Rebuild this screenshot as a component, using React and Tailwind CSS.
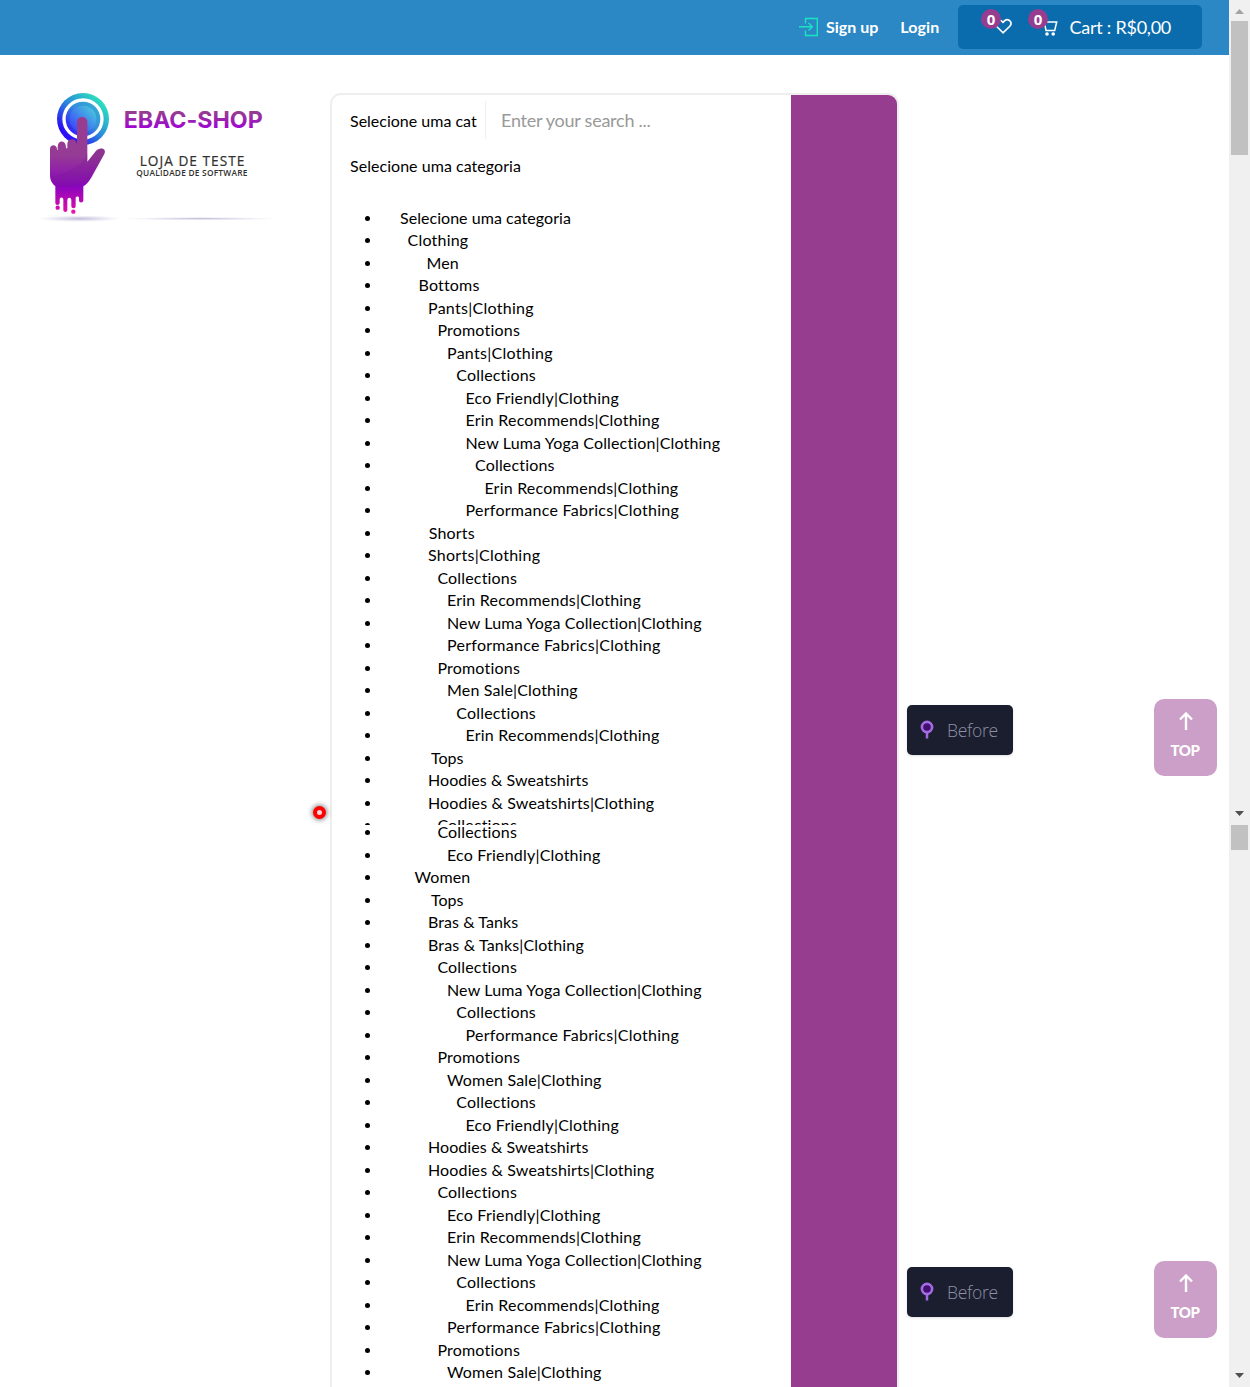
import React from "react";

const upper = [
  [400, "Selecione uma categoria"],
  [407.5, "Clothing"],
  [426.5, "Men"],
  [418.5, "Bottoms"],
  [428, "Pants|Clothing"],
  [437.4, "Promotions"],
  [447, "Pants|Clothing"],
  [456.3, "Collections"],
  [465.5, "Eco Friendly|Clothing"],
  [465.5, "Erin Recommends|Clothing"],
  [465.5, "New Luma Yoga Collection|Clothing"],
  [475, "Collections"],
  [484.4, "Erin Recommends|Clothing"],
  [465.5, "Performance Fabrics|Clothing"],
  [428.7, "Shorts"],
  [428, "Shorts|Clothing"],
  [437.4, "Collections"],
  [447, "Erin Recommends|Clothing"],
  [447, "New Luma Yoga Collection|Clothing"],
  [447, "Performance Fabrics|Clothing"],
  [437.4, "Promotions"],
  [447, "Men Sale|Clothing"],
  [456.3, "Collections"],
  [465.5, "Erin Recommends|Clothing"],
  [431, "Tops"],
  [428, "Hoodies & Sweatshirts"],
  [428, "Hoodies & Sweatshirts|Clothing"],
  [437.4, "Collections"],
];

const lower = [
  [437.4, "Collections"],
  [447, "Eco Friendly|Clothing"],
  [414.5, "Women"],
  [431, "Tops"],
  [428, "Bras & Tanks"],
  [428, "Bras & Tanks|Clothing"],
  [437.4, "Collections"],
  [447, "New Luma Yoga Collection|Clothing"],
  [456.3, "Collections"],
  [465.5, "Performance Fabrics|Clothing"],
  [437.4, "Promotions"],
  [447, "Women Sale|Clothing"],
  [456.3, "Collections"],
  [465.5, "Eco Friendly|Clothing"],
  [428, "Hoodies & Sweatshirts"],
  [428, "Hoodies & Sweatshirts|Clothing"],
  [437.4, "Collections"],
  [447, "Eco Friendly|Clothing"],
  [447, "Erin Recommends|Clothing"],
  [447, "New Luma Yoga Collection|Clothing"],
  [456.3, "Collections"],
  [465.5, "Erin Recommends|Clothing"],
  [447, "Performance Fabrics|Clothing"],
  [437.4, "Promotions"],
  [447, "Women Sale|Clothing"],
];

const tracking = {
  "Selecione uma categoria": 0.04,
  Clothing: 0.22,
  Men: 0.1,
  Bottoms: 0.18,
  "Pants|Clothing": 0.28,
  Promotions: 0.2,
  Collections: 0.17,
  "Eco Friendly|Clothing": 0.21,
  "Erin Recommends|Clothing": 0.21,
  "New Luma Yoga Collection|Clothing": 0.155,
  "Performance Fabrics|Clothing": 0.27,
  Shorts: 0.2,
  "Shorts|Clothing": 0.27,
  "Men Sale|Clothing": 0.16,
  Tops: 0,
  "Hoodies & Sweatshirts": 0.07,
  "Hoodies & Sweatshirts|Clothing": 0.14,
  "Bras & Tanks": 0.07,
  "Bras & Tanks|Clothing": 0.16,
  Women: 0.1,
  "Women Sale|Clothing": 0.17,
};

function CategoryList({ items }) {
  return (
    <ul>
      {items.map(([x, label], i) => (
        <li key={i} className="flex h-[22.5px] items-center whitespace-nowrap pl-[33px] leading-[22.5px]">
          <span className="mt-px size-[5px] shrink-0 rounded-full bg-black" />
          <span style={{ marginLeft: x - 370, letterSpacing: tracking[label] }}>{label}</span>
        </li>
      ))}
    </ul>
  );
}

function Logo() {
  return (
    <svg className="ml-[30px] mt-[25px] block" width="250" height="150" viewBox="0 0 750 450">
      <defs>
        <linearGradient id="ring" x1="0" y1="1" x2="1" y2="0">
          <stop offset="0.2" stopColor="#2b10f5" />
          <stop offset="0.5" stopColor="#2a86dd" />
          <stop offset="0.85" stopColor="#2be0bd" />
        </linearGradient>
        <linearGradient id="disc" x1="0" y1="1" x2="1" y2="0">
          <stop offset="0.15" stopColor="#2f1bfa" />
          <stop offset="0.55" stopColor="#348fdd" />
          <stop offset="0.9" stopColor="#35aed2" />
        </linearGradient>
        <linearGradient id="core" x1="0" y1="1" x2="1" y2="0">
          <stop offset="0.1" stopColor="#3a45fa" />
          <stop offset="0.9" stopColor="#48c8dc" />
        </linearGradient>
        <linearGradient id="hand" gradientUnits="userSpaceOnUse" x1="0" y1="110" x2="0" y2="400">
          <stop offset="0" stopColor="#983c8f" />
          <stop offset="0.4" stopColor="#963b95" />
          <stop offset="0.72" stopColor="#8a05be" />
          <stop offset="1" stopColor="#e010a8" />
        </linearGradient>
        <linearGradient id="word" x1="0" y1="0" x2="0" y2="1">
          <stop offset="0.25" stopColor="#963d90" />
          <stop offset="0.8" stopColor="#a004d4" />
        </linearGradient>
        <radialGradient id="shade">
          <stop offset="0" stopColor="#a7a3c9" stopOpacity="0.75" />
          <stop offset="1" stopColor="#c5c2dd" stopOpacity="0" />
        </radialGradient>
      </defs>
      <ellipse cx="148" cy="416" rx="125" ry="10" fill="url(#shade)" />
      <ellipse cx="512" cy="416" rx="235" ry="5" fill="url(#shade)" />
      <circle cx="159" cy="117" r="78" fill="url(#ring)" />
      <circle cx="159" cy="117" r="57" fill="url(#disc)" stroke="#fff" strokeWidth="10" />
      <circle cx="159" cy="117" r="40" fill="url(#core)" />
      <path
        fill="url(#hand)"
        d="M60 207c0-15 20-15 21 0v3h2v-9c0-22 24-22 25 0v4h4v-13c0-19 27-19 29 0v5V126c0-20 31-20 31 0v119l25-31c11-14 34-10 26 8l-42 75c-5 9-13 17-21 22v42c0 9-13 9-13 0v-7c0-6-10-6-10 0v24c0 9-13 9-13 0v-17c0-10-12-10-12 0v29c0 8-12 8-12 0v-31c0-9-11-9-11 0v10c0 8-13 8-13 0v-50c-9-8-16-17-16-33z"
      />
      <path fill="#6e1a85" fillOpacity="0.22" d="M172 218c-12 37-58 63-111 70 0 52 119 35 130-5l33-65c4-12-12-16-23-7l-29 35z" />
      <circle cx="83" cy="383" r="6.5" fill="#d50bb0" />
      <circle cx="130" cy="395" r="6.5" fill="#ee16a5" />
      <text x="281" y="144" fill="url(#word)" fontFamily="Inter, sans-serif" fontWeight="700" fontSize="70" textLength="417" lengthAdjust="spacingAndGlyphs">EBAC-SHOP</text>
      <text x="329" y="257" fill="#30302f" stroke="#30302f" strokeWidth="0.6" fontFamily="Open Sans, sans-serif" fontSize="41" textLength="314" lengthAdjust="spacing">LOJA DE TESTE</text>
      <text x="319" y="288" fill="#30302f" fontFamily="Open Sans, sans-serif" fontWeight="600" fontSize="25" textLength="333" lengthAdjust="spacing">QUALIDADE DE SOFTWARE</text>
    </svg>
  );
}

function Header() {
  return (
    <header className="flex h-[55px] shrink-0 bg-[#2b88c5] text-white">
      <div className="ml-[799px] flex h-[54px] w-[159px] items-center text-base font-bold">
        <svg width="20" height="20" viewBox="0 0 20 20" fill="none" stroke="#18e6c0" strokeWidth="1.4">
          <path d="M6.5 6.5V1.5h11.8v17H6.5v-5M0 9.7h13M9.5 6l3.8 3.7-3.8 3.8" />
        </svg>
        <a className="ml-[7px]">Sign up</a>
        <a className="ml-[22px] tracking-[0.1px]">Login</a>
      </div>
      <div className="mt-[5px] flex h-11 w-[244px] rounded-[5px] bg-[#0b6cad]">
        <div className="relative ml-[36px] mt-[12px] h-5 w-[18px]">
          <svg width="18" height="18" viewBox="0 0 18 18" fill="none" stroke="#fff" strokeWidth="1.6">
            <path d="M9 15.8 2.2 9C-.7 5.6 4-.2 8.4 4.7l.6.7.7-.8c4.1-4.6 9.5.7 6.1 4.7z" />
          </svg>
          <Badge className="-left-[13px] -top-[8px]" />
        </div>
        <div className="relative ml-[29px] mt-[14px] h-5 w-[18px]">
          <svg width="18" height="18" viewBox="0 0 18 18" fill="none" stroke="#fff" strokeWidth="1.5">
            <path d="M1 1.7h2l2 9.8h8.7l2-8.5H4" />
            <circle cx="6" cy="15" r="1.8" fill="#fff" stroke="none" />
            <circle cx="12.2" cy="15" r="1.8" fill="#fff" stroke="none" />
          </svg>
          <Badge className="-left-[13px] -top-[10px]" />
        </div>
        <span className="ml-[10.5px] whitespace-nowrap text-lg leading-[45px] tracking-[-0.25px]">Cart : R$0,00</span>
      </div>
    </header>
  );
}

function Badge({ className }) {
  return (
    <span className={`absolute flex size-5 items-center justify-center rounded-full bg-[#963d8f] font-['Open_Sans',sans-serif] text-[15px] font-bold leading-none ${className}`}>
      0
    </span>
  );
}

function Before({ className }) {
  return (
    <div className={`absolute left-[907px] flex h-[50px] w-[106px] items-center rounded-[5px] bg-[#1b1e2e] shadow ${className}`}>
      <svg className="ml-[13px]" width="14" height="20" viewBox="0 0 14 20">
        <path d="M7 10v8.5" stroke="#a06ae0" strokeWidth="2.5" />
        <circle cx="7" cy="7" r="5.1" fill="#41106f" stroke="#a46be5" strokeWidth="2.6" />
      </svg>
      <span className="ml-[13px] mt-px font-['Open_Sans',sans-serif] text-[17.5px] font-light tracking-[-0.3px] text-[#8d8fa6]">Before</span>
    </div>
  );
}

function Top({ className }) {
  return (
    <div className={`absolute left-[1154px] flex h-[77px] w-[63px] flex-col items-center rounded-[10px] bg-[#cb9fc8] text-white ${className}`}>
      <svg className="mt-[13px]" width="14" height="19" viewBox="0 0 14 19" fill="none" stroke="#fff" strokeWidth="2.4">
        <path d="M7 18V2M1 7.5l6-6 6 6" />
      </svg>
      <span className="mr-px mt-[7px] text-[15px] font-black leading-6 tracking-[-0.4px]">TOP</span>
    </div>
  );
}

function Scrollbar() {
  return (
    <aside className="flex w-[21px] shrink-0 flex-col bg-[#f0f0f0]">
      <div className="flex h-[825px] flex-col items-center">
        <svg className="mt-[9px] block" width="9" height="5" viewBox="0 0 9 5"><path d="M0 5 4.5 0 9 5z" fill="#a3a3a3" /></svg>
        <div className="mt-[7px] h-[134px] w-[17px] bg-[#c1c1c1]" />
        <svg className="mb-[9px] mt-auto block" width="9" height="5" viewBox="0 0 9 5"><path d="M0 0h9L4.5 5z" fill="#505050" /></svg>
      </div>
      <div className="flex flex-1 flex-col items-center">
        <div className="h-[25px] w-[17px] bg-[#c1c1c1]" />
        <svg className="mb-[9px] mt-auto block" width="9" height="5" viewBox="0 0 9 5"><path d="M0 0h9L4.5 5z" fill="#505050" /></svg>
      </div>
    </aside>
  );
}

export default function App() {
  return (
    <div className="relative flex h-[1387px] w-[1250px] overflow-hidden bg-white font-['Lato',sans-serif] text-base text-black [font-variant-ligatures:none]">
      <main className="flex w-[1229px] flex-col">
        <Header />
        <div className="flex min-h-0 flex-1">
          <div className="w-[330px] shrink-0"><Logo /></div>
          <section className="mt-[38px] flex w-[569px] overflow-hidden rounded-t-[11px] border-2 border-b-0 border-[#eeeeee]">
            <div className="w-[459px] shrink-0">
              <div className="flex h-[730px] flex-col overflow-hidden">
                <div className="flex h-[51px] shrink-0 pt-[6px]">
                  <div className="ml-[18px] h-[38px] w-[136px] overflow-hidden whitespace-nowrap border-r border-[#eeeeee] leading-[40px]">Selecione uma cat</div>
                  <div className="ml-[15px] text-lg leading-[39px] tracking-[-0.25px] text-[#999]">Enter your search ...</div>
                </div>
                <div className="ml-[18px] h-[60.7px] shrink-0 pt-[8px] leading-[23px] tracking-[0.04px]">Selecione uma categoria</div>
                <CategoryList items={upper} />
              </div>
              <div className="h-[562px] overflow-hidden">
                <div className="-mt-[4px]"><CategoryList items={lower} /></div>
              </div>
            </div>
            <div className="flex-1 bg-[#963d8f]" />
          </section>
        </div>
      </main>
      <Scrollbar />
      <span className="absolute left-[313px] top-[806px] size-[13px] rounded-full border-4 border-[#ff0000] bg-[#ffd5d8] shadow-[0_0_5px_1px_rgba(0,0,0,0.5)]" />
      <Before className="top-[705px]" />
      <Before className="top-[1267px]" />
      <Top className="top-[699px]" />
      <Top className="top-[1261px]" />
    </div>
  );
}
